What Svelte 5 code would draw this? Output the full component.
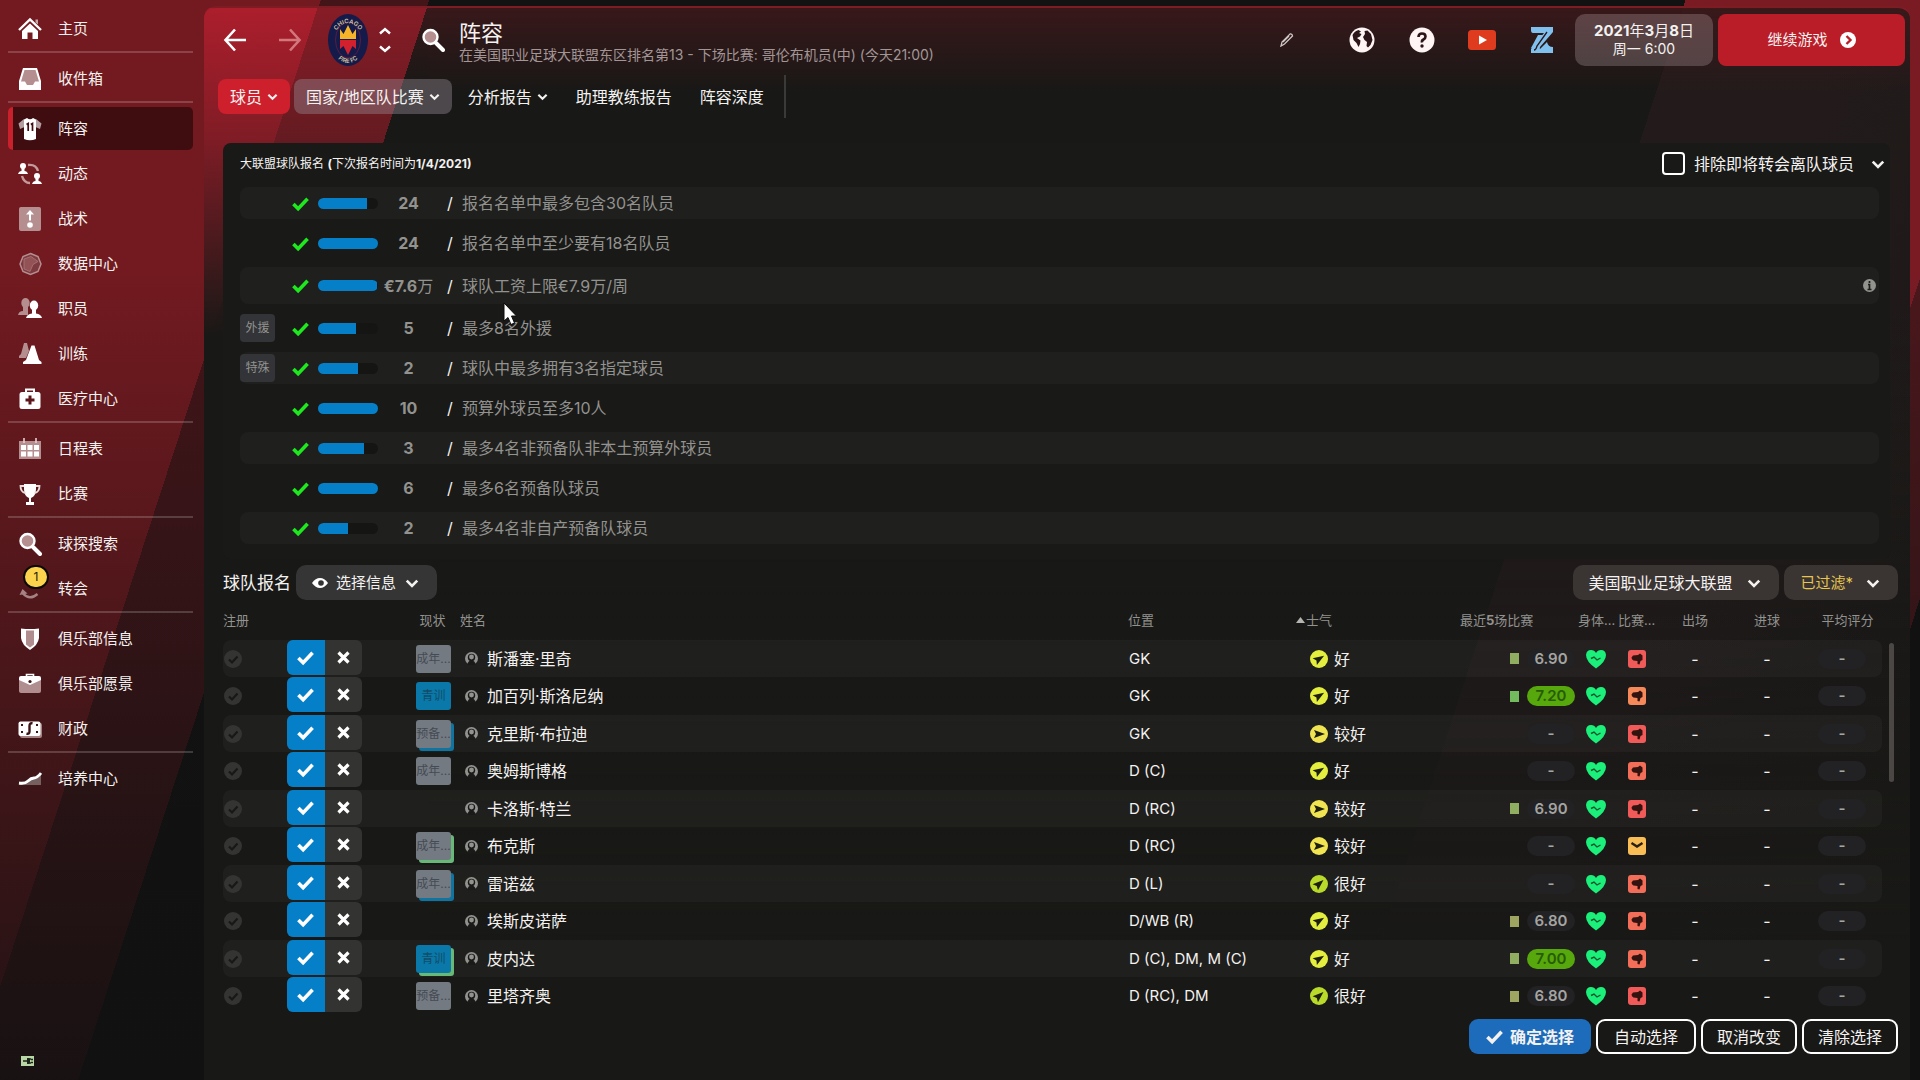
<script>
  const nav = [
    [{ icon: 'home', label: '主页' }],
    [{ icon: 'inbox', label: '收件箱' }],
    [
      { icon: 'shirt', label: '阵容', active: true },
      { icon: 'dynamics', label: '动态' },
      { icon: 'tactics', label: '战术' },
      { icon: 'data', label: '数据中心' },
      { icon: 'staff', label: '职员' },
      { icon: 'training', label: '训练' },
      { icon: 'medical', label: '医疗中心' }
    ],
    [
      { icon: 'calendar', label: '日程表' },
      { icon: 'trophy', label: '比赛' }
    ],
    [
      { icon: 'search', label: '球探搜索' },
      { icon: 'transfer', label: '转会', badge: 1 }
    ],
    [
      { icon: 'shield', label: '俱乐部信息' },
      { icon: 'briefcase', label: '俱乐部愿景' },
      { icon: 'money', label: '财政' }
    ],
    [{ icon: 'growth', label: '培养中心' }]
  ];

  const tabs = [
    { label: '球员', menu: true, kind: 'primary' },
    { label: '国家/地区队比赛', menu: true, kind: 'soft' },
    { label: '分析报告', menu: true, kind: '' },
    { label: '助理教练报告', menu: false, kind: '' },
    { label: '阵容深度', menu: false, kind: '' }
  ];

  const rules = [
    { tag: '', fill: 82, value: '24', unit: '', text: '报名名单中最多包含30名队员' },
    { tag: '', fill: 100, value: '24', unit: '', text: '报名名单中至少要有18名队员' },
    { tag: '', fill: 98, value: '€7.6', unit: '万', text: '球队工资上限€7.9万/周', info: true },
    { tag: '外援', fill: 63, value: '5', unit: '', text: '最多8名外援' },
    { tag: '特殊', fill: 66, value: '2', unit: '', text: '球队中最多拥有3名指定球员' },
    { tag: '', fill: 100, value: '10', unit: '', text: '预算外球员至多10人' },
    { tag: '', fill: 76, value: '3', unit: '', text: '最多4名非预备队非本土预算外球员' },
    { tag: '', fill: 100, value: '6', unit: '', text: '最多6名预备队球员' },
    { tag: '', fill: 50, value: '2', unit: '', text: '最多4名非自产预备队球员' }
  ];

  const players = [
    { tag: '成年...', name: '斯潘塞·里奇', pos: 'GK', morale: 'good', form: 'a', rating: '6.90', sharp: 'r1' },
    { tag: '青训', youth: true, name: '加百列·斯洛尼纳', pos: 'GK', morale: 'good', form: 'c', rating: '7.20', sharp: 'r3' },
    { tag: '预备...', back: 'blue', name: '克里斯·布拉迪', pos: 'GK', morale: 'fair', rating: '-', sharp: 'r1' },
    { tag: '成年...', name: '奥姆斯博格', pos: 'D (C)', morale: 'good', rating: '-', sharp: 'r2' },
    { tag: '', name: '卡洛斯·特兰', pos: 'D (RC)', morale: 'fair', form: 'a', rating: '6.90', sharp: 'r1' },
    { tag: '成年...', back: 'green', name: '布克斯', pos: 'D (RC)', morale: 'fair', rating: '-', sharp: 'steady' },
    { tag: '成年...', back: 'blue', name: '雷诺兹', pos: 'D (L)', morale: 'great', rating: '-', sharp: 'r2' },
    { tag: '', name: '埃斯皮诺萨', pos: 'D/WB (R)', morale: 'good', form: 'b', rating: '6.80', sharp: 'r2' },
    { tag: '青训', youth: true, back: 'green', name: '皮内达', pos: 'D (C), DM, M (C)', morale: 'good', form: 'a', rating: '7.00', sharp: 'r2' },
    { tag: '预备...', name: '里塔齐奥', pos: 'D (RC), DM', morale: 'great', form: 'b', rating: '6.80', sharp: 'r1' }
  ];
  const moraleText = { good: '好', fair: '较好', great: '很好' };
  const moraleTurn = { good: -32, fair: 0, great: -42 };

  let excluded = $state(false);
  let picks = $state(players.map(() => true));
</script>

{#snippet chevron(size)}
  <svg class="chev" width={size} height={size} viewBox="0 0 12 12" aria-hidden="true">
    <path d="M1.5 4 6 8.5 10.500 4" fill="none" stroke="currentColor" stroke-width="2.3" />
  </svg>
{/snippet}

{#snippet tick(w)}
  <svg width={w} height={w} viewBox="0 0 18 18" aria-hidden="true">
    <path d="M1.500 9.500 6.500 14.500 16.500 4" fill="none" stroke="currentColor" stroke-width="3.8" />
  </svg>
{/snippet}

{#snippet lens()}
  <circle cx="9.500" cy="9" r="7" fill="#b58f90" stroke="#fff" stroke-width="2.4" />
  <path d="m15 15 7 7" stroke="#fff" stroke-width="4" stroke-linecap="round" />
{/snippet}

{#snippet navIcon(name)}
  <svg width="24" height="24" viewBox="0 0 24 24" aria-hidden="true" fill="#fff">
    {#if name === 'home'}
      <path d="M1 13 12 2.500 23 13" fill="none" stroke="#fff" stroke-width="2.4" />
      <path d="M12 6.500 20 14v8h-5.500v-6.500h-5V22H4v-8z" />
      <path d="M17.500 2.500H20v5l-2.500-2z" opacity=".6" />
    {:else if name === 'inbox'}
      <path d="M5 1h14l4 13v9H1v-9z" />
      <path d="M6.500 3h11l3.500 11.500h-4L15 18H9l-2-3.500H3z" fill="#b58f90" />
    {:else if name === 'shirt'}
      <path d="M6 2 .5 6.500 2 12l4.500-2zM18 2l5.500 4.500L22 12l-4.500-2z" opacity=".6" />
      <path d="M6 2.500 9 1q3 2.500 6 0l3 1.500V22q-6 2.500-12 0z" />
      <path d="M8.500 7.500 10.200 6.500V14M12.800 7.500 14.500 6.500V14" fill="none" stroke="#3f0d10" stroke-width="1.700" />
    {:else if name === 'dynamics'}
      <circle cx="5" cy="4" r="3" /><path d="M0 12q1-3 3.500-3V6h3v3Q9 9 10 12z" />
      <circle cx="19" cy="14" r="3" /><path d="M14 22q1-3 3.500-3v-3h3v3q2.500 0 3.500 3z" />
      <path d="M10 3q8-1 10 6M4 14q2 7 8 7" fill="none" stroke="#c59a9b" stroke-width="2.400" />
    {:else if name === 'tactics'}
      <rect x="1" y="0" width="22" height="24" rx="2" fill="#b58f90" />
      <path d="M12 3 8 7.500H11v6h2V7.500h3z" /><circle cx="12" cy="18" r="2.800" />
    {:else if name === 'data'}
      <path d="m12.500 1.500 7.500 3 3 7.500-3 7.500-7.500 3-7.500-3-3-7.500 3-7.500z" fill="#7d3a3f" stroke="#b58f90" stroke-width="1.500" />
      <path d="m6 7 7-2.500 7 5-5 3-3 7-6-2.500z" fill="#935256" stroke="#a9797b" stroke-width=".8" />
    {:else if name === 'staff'}
      <g fill="#b58f90"><ellipse cx="7.500" cy="6" rx="4.200" ry="5" /><path d="M0 18q1-4 5-4V9h5v9z" /></g>
      <ellipse cx="16" cy="8.500" rx="4.200" ry="5" /><path d="M8 21q1-4 6-4.500v-4h4v4q5 .5 6 4.500z" />
    {:else if name === 'training'}
      <path d="m6 1 3 0 2 8-3 7H1v-2l2-2z" fill="#b58f90" />
      <path d="M13.500 3.500h3L21 18l2.500 2v2H5v-2l3-2z" />
    {:else if name === 'medical'}
      <path d="M8 5V2.500h8V5" fill="none" stroke="#fff" stroke-width="2" />
      <rect x="1.500" y="5" width="21" height="17" rx="2.500" />
      <path d="M12 8.500v9M7.500 13h9" stroke="#5c161b" stroke-width="3" />
    {:else if name === 'calendar'}
      <path d="M1 4h22v18H1z" fill="#b58f90" /><path d="M6 1v5M18 1v5" stroke="#e4cfcf" stroke-width="1.600" />
      <path d="M3 8h5v5H3zM9.500 8h5v5h-5zM16 8h5v5h-5zM3 14.500h5v5H3zM9.500 14.500h5v5h-5zM16 14.500h5v5h-5z" />
    {:else if name === 'trophy'}
      <path d="M6 2h12v5q0 7-5 9v4h3v3H8v-3h3v-4Q6 14 6 7z" />
      <path d="M6 4H2.500q0 6 5 7M18 4h3.500q0 6-5 7" fill="none" stroke="#e9dcdc" stroke-width="1.800" />
    {:else if name === 'search'}
      {@render lens()}
    {:else if name === 'transfer'}
      <path d="M4.500 16q7 8 15 1" fill="none" stroke="#a58384" stroke-width="2.400" />
      <path d="m1.500 18 3-6 5 4.500z" fill="#a58384" />
    {:else if name === 'shield'}
      <path d="M3 1.500q9 1 18 0V11q-1 7-9 12-8-5-9-12z" />
      <path d="M8 3.500h8v14l-4 3-4-3z" fill="#b08e90" />
    {:else if name === 'briefcase'}
      <path d="M8.500 5V2.500h7V5" fill="none" stroke="#fff" stroke-width="1.600" />
      <path d="M1 8h22v11q0 2-2 2H3q-2 0-2-2z" fill="#b08e90" />
      <path d="M3 4h18q2 0 2 2v2l-11 5L1 8V6q0-2 2-2z" /><circle cx="12" cy="9.500" r="1.600" fill="#3b1316" />
    {:else if name === 'money'}
      <rect x="2" y="6" width="22" height="15" rx="2" fill="#a58384" />
      <rect x="0.500" y="4.500" width="22" height="14.500" rx="2" />
      <path d="M14.500 6.500q-3-1-3 2.500v5.500q0 3-3 2" fill="none" stroke="#3b1316" stroke-width="2.400" />
      <path d="M3 7h2v2H3zM18 7h2v2h-2zM3 14h2v2H3zM18 14h2v2h-2z" fill="#3b1316" />
    {:else if name === 'growth'}
      <path d="M1 17h6l5-5 11-5v11H1z" fill="#75605f" />
      <path d="M1 16q6 1 9-2t6-3 7-5" fill="none" stroke="#fff" stroke-width="2.800" />
    {/if}
  </svg>
{/snippet}

<div class="app">
  <nav class="side" aria-label="主菜单">
    {#each nav as group}
      <ul>
        {#each group as item}
          <li>
            <a href="#{item.icon}" class:active={item.active}>
              <span class="ico">
                {@render navIcon(item.icon)}
                {#if item.badge}<span class="count">{item.badge}</span>{/if}
              </span>
              {item.label}
            </a>
          </li>
        {/each}
      </ul>
    {/each}
    <svg class="battery" width="14" height="10" viewBox="0 0 14 10" aria-hidden="true">
      <rect width="13" height="10" fill="#b9d6a5" />
      <path d="M2 5h4M6 3h4M6 7h4M10 3.500h2M10 6.500h2M7 2v6" stroke="#1c2419" stroke-width="1.500" />
      <path d="M6 2.500h3v5H6z" fill="#1c2419" />
    </svg>
  </nav>

  <main>
    <header class="top">
      <button class="plain" aria-label="后退">
        <svg width="24" height="24" viewBox="0 0 24 24"><path d="M23 12H3M12 1.500 2.500 12 12 22.500" fill="none" stroke="#fff" stroke-width="2.600" /></svg>
      </button>
      <button class="plain fwd" aria-label="前进">
        <svg width="24" height="24" viewBox="0 0 24 24"><path d="M1 12h20M12 1.500 21.500 12 12 22.500" fill="none" stroke="#d4777d" stroke-width="2.600" /></svg>
      </button>
      <svg class="crest" width="40" height="52" viewBox="0 0 40 52" role="img" aria-label="Chicago Fire FC">
        <defs>
          <path id="arcTop" d="M7 20A14 17 0 0 1 33 20" />
          <path id="arcBottom" d="M5 31A15 18 0 0 0 35 31" />
        </defs>
        <ellipse cx="20" cy="26" rx="20" ry="26" fill="#141a4a" />
        <ellipse cx="20" cy="26" rx="12.500" ry="18" fill="none" stroke="#5d1a40" />
        <text fill="#d3c49f" font-size="6" font-weight="600" text-anchor="middle"><textPath href="#arcTop" startOffset="50%">CHICAGO</textPath></text>
        <text fill="#d3c49f" font-size="6" font-weight="600" text-anchor="middle"><textPath href="#arcBottom" startOffset="50%">FIRE FC</textPath></text>
        <path d="M12 25V15l3.500 5L20 11l4.500 9 3.500-5v10z" fill="#f6b428" />
        <path d="M12 26h16v9l-3.500-3L20 41l-4.500-9-3.500 3z" fill="#d2202f" />
      </svg>
      <div class="step">
        <button class="plain" aria-label="上一支球队"><svg width="12" height="8" viewBox="0 0 12 8"><path d="M1 6.500 6 2l5 4.500" fill="none" stroke="#fff" stroke-width="2.400" /></svg></button>
        <button class="plain" aria-label="下一支球队"><svg width="12" height="8" viewBox="0 0 12 8"><path d="M1 1.500 6 6l5-4.500" fill="none" stroke="#fff" stroke-width="2.400" /></svg></button>
      </div>
      <button class="plain find" aria-label="搜索">
        <svg width="24" height="24" viewBox="0 0 24 24">{@render lens()}</svg>
      </button>
      <div class="title">
        <h1>阵容</h1>
        <p>在美国职业足球大联盟东区排名第13 - 下场比赛: 哥伦布机员(中) (今天21:00)</p>
      </div>
      <div class="tools">
        <button class="plain" aria-label="编辑">
          <svg width="14" height="14" viewBox="0 0 14 14"><path d="m1 13 1-4 8-8q2-.5 2.500 2l-8 8zM3 9l6-6" fill="none" stroke="#cfc6c6" stroke-width="1.300" /></svg>
        </button>
        <button class="plain" aria-label="世界">
          <svg width="26" height="26" viewBox="0 0 26 26"><circle cx="13" cy="13" r="12.500" fill="#fff5f4" /><path d="M3.500 8q2-4 6-5l2.500 1.500-2 1.500 2.500 1-1.500 2.500L8 11l3.500 2.500-.5 3.500-1.500 3-2-4-3-3zM15.500 4l3-.5 3.500 3.500 1.500 6-2 5-2.500 2.500-1.500-1.500.5-4-2.500-2-1.500-3 2-3z" fill="#2c1619" /></svg>
        </button>
        <button class="plain" aria-label="帮助">
          <svg width="26" height="26" viewBox="0 0 26 26"><circle cx="13" cy="13" r="12.500" fill="#fff5f4" /><path d="M9.500 10q0-3.500 3.500-3.500t3.500 3q0 2-2 3T13 15.500" fill="none" stroke="#2c1619" stroke-width="2.600" /><circle cx="13" cy="19" r="1.700" fill="#2c1619" /></svg>
        </button>
        <button class="plain" aria-label="视频">
          <svg width="28" height="20" viewBox="0 0 28 20"><rect width="28" height="20" rx="3.500" fill="#df3b1f" /><path d="m11 5.500 8 4.500-8 4.500z" fill="#fff" /></svg>
        </button>
        <button class="plain" aria-label="社区">
          <svg width="24" height="26" viewBox="0 0 24 26"><path d="M1 0h22v5L10 20q-1 3 2 3h11v3H1v-4L14 6H3Q1 6 1 3z" fill="#7fc0ee" /><path d="M8 8h5L6 19q-2 3-5 2zM17 15q1 5 6 5v6H11q-3-1-1-4z" fill="#7fc0ee" /><path d="M17 5 7 19q-1 4-3 4" fill="none" stroke="#2c1619" stroke-width="1.300" /></svg>
        </button>
      </div>
      <button class="date">
        <span class="day"><b>2021</b>年<b>3</b>月<b>8</b>日</span>
        <span>周一 6:00</span>
      </button>
      <button class="go">
        继续游戏
        <svg width="16" height="16" viewBox="0 0 16 16" aria-hidden="true"><circle cx="8" cy="8" r="8" fill="#fff" /><path d="m6.500 4 4 4-4 4" fill="none" stroke="#bb1d28" stroke-width="2.400" /></svg>
      </button>
    </header>

    <div class="tabs">
      {#each tabs as tab}
        <button class="tab {tab.kind}">{tab.label}{#if tab.menu}{@render chevron(11)}{/if}</button>
      {/each}
    </div>

    <section class="rules">
      <div class="rules-head">
        <h2>大联盟球队报名 <b>(</b>下次报名时间为<b>1/4/2021)</b></h2>
        <label class="exclude"><input type="checkbox" bind:checked={excluded} />排除即将转会离队球员</label>
        <button class="plain fold" aria-label="收起">{@render chevron(14)}</button>
      </div>
      <ul>
        {#each rules as rule}
          <li class:tall={rule.info}>
            <span>{#if rule.tag}<span class="rtag">{rule.tag}</span>{/if}</span>
            <span class="met">{@render tick(17)}</span>
            <span class="bar"><span style:width="{rule.fill}%"></span></span>
            <span class="val"><b>{rule.value}</b>{rule.unit}</span>
            <span class="slash">/</span>
            <span>{rule.text}</span>
            {#if rule.info}
              <svg width="13" height="13" viewBox="0 0 13 13" aria-hidden="true"><circle cx="6.500" cy="6.500" r="6.500" fill="#92928f" /><path d="M6.500 2v2M5 5.500h1.500v5M4.500 10.500h4" fill="none" stroke="#1d1d1b" stroke-width="1.700" /></svg>
            {/if}
          </li>
        {/each}
      </ul>
      <svg class="pointer" width="14" height="24" viewBox="0 0 14 24" aria-hidden="true">
        <path d="M1 1v18l4-3.500 3 7 3.500-1.500-3-7h5z" fill="#fff" stroke="#0c0c0c" stroke-width="1" />
      </svg>
    </section>

    <section class="squad">
      <div class="squad-head">
        <h2>球队报名</h2>
        <button class="drop">
          <svg width="16" height="12" viewBox="0 0 16 12" aria-hidden="true"><path d="M0 6q3.500-5 8-5t8 5q-3.500 5-8 5T0 6z" fill="#fff" /><circle cx="9" cy="6" r="2.800" fill="#333" /></svg>
          选择信息{@render chevron(14)}
        </button>
        <span class="league">
          <select aria-label="赛事"><option>美国职业足球大联盟</option></select>
          {@render chevron(14)}
        </span>
        <button class="drop filter"><span>已过滤*</span>{@render chevron(14)}</button>
      </div>

      <div class="scroller">
        <table>
          <colgroup>
            <col class="c-reg" /><col class="c-pick" /><col class="c-tag" /><col /><col class="c-pos" /><col class="c-mor" />
            <col class="c-form" /><col class="c-con" /><col class="c-shp" /><col class="c-app" /><col class="c-goal" /><col class="c-avg" />
          </colgroup>
          <thead>
            <tr>
              <th>注册</th><th></th><th class="mid htag">现状</th><th class="hname">姓名</th><th>位置</th>
              <th class="hmor"><svg width="9" height="6" viewBox="0 0 9 6" aria-hidden="true"><path d="M0 6 4.500 0 9 6z" fill="#b4b4b1" /></svg>士气</th>
              <th class="hform">最近<b>5</b>场比赛</th><th>身体...</th><th>比赛...</th>
              <th class="mid">出场</th><th class="mid">进球</th><th class="mid havg">平均评分</th>
            </tr>
          </thead>
          <tbody>
            {#each players as p, i}
              <tr>
                <td><svg width="18" height="18" viewBox="0 0 18 18" aria-hidden="true"><circle cx="9" cy="9" r="9" fill="#343432" /><path d="m5 9.500 3 3 5.500-6" fill="none" stroke="#181817" stroke-width="2.200" /></svg></td>
                <td>
                  <span class="pick">
                    <button aria-label="注册{p.name}" aria-pressed={picks[i]} onclick={() => (picks[i] = true)}>{@render tick(17)}</button>
                    <button class="no" aria-label="移除{p.name}" aria-pressed={!picks[i]} onclick={() => (picks[i] = false)}>
                      <svg width="13" height="13" viewBox="0 0 13 13" aria-hidden="true"><path d="m1.500 1.500 10 10m0-10-10 10" stroke="currentColor" stroke-width="3.200" /></svg>
                    </button>
                  </span>
                </td>
                <td class="mid">{#if p.tag}<span class="ptag {p.back ?? ''}" class:youth={p.youth}>{p.tag}</span>{/if}</td>
                <td class="name">
                  <span class="flex">
                    <svg width="13" height="13" viewBox="0 0 13 13" aria-hidden="true"><circle cx="6.500" cy="6.500" r="6.500" fill="#92928f" /><circle cx="6.500" cy="5.500" r="3.700" fill="#1a1a19" /><path d="M2.500 13q0-4.500 4-4.500t4 4.500z" fill="#1a1a19" /><circle cx="6.500" cy="5" r="2.400" fill="#92928f" /></svg>
                    <a href="#player-{i}">{p.name}</a>
                  </span>
                </td>
                <td class="pos">{p.pos}</td>
                <td class="mor">
                  <span class="flex">
                    <svg class={p.morale} width="18" height="18" viewBox="0 0 18 18" aria-hidden="true"><circle cx="9" cy="9" r="9" fill="currentColor" /><path d="M4 5 15 9 4 13l2-4z" fill="#1d1f0c" transform="rotate({moraleTurn[p.morale]} 9 9)" /></svg>
                    {moraleText[p.morale]}
                  </span>
                </td>
                <td>
                  <span class="flex form">
                    {#if p.form}<span class="sq {p.form}"></span>{/if}
                    <span class="pill" class:win={p.rating.startsWith('7')}>{p.rating}</span>
                  </span>
                </td>
                <td class="mid icon"><svg width="20" height="20" viewBox="0 0 20 20" aria-hidden="true"><path d="M10 19.500Q0 12.500 0 6 .5 1 5 1q3.500 0 5 3 1.500-3 5-3 4.500 0 5 5 0 6.500-10 13.500z" fill="#1bf07a" /><path d="m5 9.500 3-1.500 3 3 3.500-2" fill="none" stroke="#12532e" stroke-width="1.400" /></svg></td>
                <td class="mid icon">
                  <svg class={p.sharp} width="18" height="18" viewBox="0 0 18 18" aria-hidden="true"><rect width="18" height="18" rx="3" fill="currentColor" />
                    {#if p.sharp === 'steady'}
                      <path d="M3.500 6 9 9.500 14.500 6" fill="none" stroke="#2a2010" stroke-width="2.400" />
                    {:else}
                      <path d="M3.500 7.500 5 5.500l5-.5 2-1.500 2.500 2v4.500l-2 1-1 3.500-2-.5V11l-4-.5q-2-1-2-3z" fill="#33130f" />
                    {/if}
                  </svg>
                </td>
                <td class="mid">-</td><td class="mid">-</td>
                <td class="mid icon"><span class="pill">-</span></td>
              </tr>
            {/each}
          </tbody>
        </table>
        <span class="thumb"></span>
      </div>

      <footer>
        <button class="confirm">{@render tick(17)}确定选择</button>
        <button class="auto">自动选择</button>
        <button>取消改变</button>
        <button>清除选择</button>
      </footer>
    </section>
  </main>
</div>

<style>
  :global(body) { background: #111; }
  .app {
    min-height: 100vh;
    box-sizing: border-box;
    display: grid;
    grid-template-columns: 204px minmax(0, 1fr);
    padding: 6px 10px 0 0;
    font-family: Inter, "Noto Sans CJK SC", sans-serif;
    font-size: 16px;
    line-height: 20px;
    color: #f4f2f0;
    background:
      linear-gradient(180deg, rgba(17, 17, 17, 0) 0, rgba(17, 17, 17, 0) 25%, rgba(17, 17, 17, .85) 100%),
      linear-gradient(108deg, #721a20 0 305px, #431519 305px 408px, #111211 408px 1603px, #7a1b24 1603px 1912px, #4a171c 1912px 2011px, #111 2011px);
  }
  button, select, input { font: inherit; color: inherit; margin: 0; }
  button { border: 0; padding: 0; background: none; cursor: pointer; }
  svg { display: block; flex: none; }
  ul { list-style: none; margin: 0; padding: 0; }
  h1, h2, p { margin: 0; font-weight: 400; }
  a { color: inherit; text-decoration: none; }
  b { font-weight: 700; }
  .plain { display: flex; align-items: center; justify-content: center; }

  .side { display: flex; flex-direction: column; padding: 0 11px 14px 8px; font-size: 15px; }
  .side ul + ul { border-top: 2px solid rgba(255, 255, 255, .18); padding-top: 3px; }
  .side li { height: 45px; display: flex; align-items: center; }
  .side a {
    box-sizing: border-box; width: 100%; height: 43px; display: flex; align-items: center; gap: 16px;
    padding-left: 5px; border-left: 5px solid transparent; border-radius: 5px;
  }
  .side a.active { background: #3f0d10; border-left-color: #c9202c; }
  .ico { position: relative; }
  .count {
    position: absolute; left: 5px; top: -12px; width: 22px; height: 20px; border: 2px solid #0c0a08; border-radius: 13px;
    background: #fbd34c; color: #221a0a; font-size: 12px; text-align: center;
  }
  .battery { margin: auto 0 0 13px; }

  main {
    display: flex; flex-direction: column; border-radius: 12px 12px 0 0; border-top: 2px solid rgba(160, 30, 42, .75); box-sizing: border-box;
    background:
      linear-gradient(180deg, rgba(24, 24, 22, 0) 0, rgba(24, 24, 22, .3) 130px, #181816 330px) 0 0 / 224px 100% no-repeat,
      linear-gradient(108deg, #ac1e2c 0 108px, #861c26 108px 212px, rgba(24, 24, 22, 0) 212px),
      linear-gradient(180deg, rgba(60, 24, 26, .9) 0, rgba(24, 24, 22, 0) 84px),
      linear-gradient(180deg, rgba(24, 24, 22, 0) 300px, #181816 940px),
      linear-gradient(108deg, #181816 1407px, #231b1b 1407px 1560px, #191816 1900px);
  }
  .top { display: flex; align-items: center; padding: 6px 5px 0 19px; height: 52px; }
  .fwd { margin-left: 31px; }
  .crest { margin-left: 26px; }
  .step { display: flex; flex-direction: column; gap: 10px; margin-left: 11px; }
  .find { margin-left: 30px; }
  .title { margin-left: 14px; padding-top: 4px; }
  h1 { font-size: 22px; line-height: 26px; }
  .title p { font-size: 14px; line-height: 18px; color: #a39596; white-space: nowrap; }
  .tools { margin-left: auto; display: grid; grid-template-columns: 90px repeat(4, 60px); place-items: center; padding-right: 3px; }
  .date {
    box-sizing: border-box; width: 138px; height: 52px; border-radius: 10px; background: rgba(255, 235, 240, .2);
    display: flex; flex-direction: column; align-items: center; justify-content: center; font-size: 14px; line-height: 18px;
  }
  .day { font-size: 15px; }
  .go {
    width: 187px; height: 52px; margin-left: 5px; border-radius: 8px; background: #bb1d28;
    display: flex; align-items: center; justify-content: center; gap: 12px; font-size: 15px;
  }

  .tabs { display: flex; align-items: center; gap: 4px; align-self: flex-start; height: 43px; margin: 9px 0 0 14px; padding-right: 8px; border-right: 2px solid #3a3a38; }
  .tab { height: 35px; padding: 0 12px; border-radius: 8px; display: flex; align-items: center; gap: 5px; white-space: nowrap; }
  .primary { background: #cd1f2c; }
  .soft { background: rgba(150, 140, 150, .42); }

  .rules { position: relative; margin: 25px 20px 0 19px; padding: 8px 0 15px 17px; border-radius: 8px; background: #191917; }
  .rules-head { display: flex; align-items: center; height: 25px; }
  .rules-head h2 { flex: 1; font-size: 12px; }
  .exclude { display: flex; align-items: center; gap: 9px; }
  .exclude input { appearance: none; box-sizing: border-box; width: 23px; height: 23px; border: 2px solid #fff; border-radius: 4px; }
  .exclude input:checked { background: #0580c8; }
  .fold { margin: 0 5px 0 17px; }
  .rules ul { display: grid; gap: 8px; margin: 11px 11px 0 0; }
  .rules li {
    height: 32px; display: grid; grid-template-columns: 52px 26px 60px 61px 23px minmax(0, 1fr) auto; align-items: center;
    box-sizing: border-box; border-radius: 8px; padding-right: 3px; color: #92928f;
  }
  .rules li.tall { height: 37px; }
  .rules li:nth-child(odd) { background: #1f1f1d; }
  .rtag { display: block; width: 35px; height: 28px; border-radius: 4px; background: #333438; text-align: center; font-size: 12px; line-height: 28px; }
  .met { color: #1ee81e; }
  .bar { height: 11px; border-radius: 6px; background: #151514; overflow: hidden; }
  .bar span { display: block; height: 100%; background: #0580c8; }
  .val { text-align: center; white-space: nowrap; }
  .slash { padding-left: 8px; color: #f4f2f0; }
  .pointer { position: absolute; left: 280px; top: 159px; }

  .squad { display: flex; flex-direction: column; margin: 6px 12px 0 19px; }
  .squad-head { display: flex; align-items: center; gap: 5px; height: 35px; }
  .squad-head h2 { font-size: 17px; white-space: nowrap; }
  .drop { display: flex; align-items: center; gap: 8px; height: 35px; padding: 0 18px 0 16px; border-radius: 10px; background: #353535; font-size: 15px; }
  .drop .chev { margin-left: 1px; }
  .league { margin-left: auto; display: grid; align-items: center; }
  .league select { grid-area: 1 / 1; appearance: none; height: 35px; border: 0; border-radius: 10px; background: #3a3433; padding: 0 46px 0 15px; outline: 0; }
  .league .chev { grid-area: 1 / 1; justify-self: end; margin-right: 18px; pointer-events: none; }
  .filter { background: #3a3433; }
  .filter span { color: #e6c650; }
  .filter .chev { margin-left: 5px; }

  .scroller { display: grid; grid-template-columns: minmax(0, 1fr) auto; column-gap: 7px; padding-right: 4px; }
  table { width: 100%; table-layout: fixed; border-collapse: separate; border-spacing: 0; }
  .c-reg { width: 57px; } .c-pick { width: 125px; } .c-tag { width: 52px; } .c-pos { width: 170px; } .c-mor { width: 160px; }
  .c-form { width: 120px; } .c-con { width: 40px; } .c-shp { width: 42px; } .c-app { width: 74px; } .c-goal { width: 70px; } .c-avg { width: 80px; }
  th { height: 40px; padding: 0 0 0 2px; box-sizing: border-box; text-align: left; font-size: 13px; font-weight: 400; color: #92928f; white-space: nowrap; }
  th:first-child { padding: 0; }
  th.mid, td.mid { text-align: center; padding: 0; }
  th.htag { padding-left: 3px; }
  .hname { padding-left: 3px; }
  .hmor { padding: 0; }
  .hmor svg { display: inline-block; margin-right: 1px; vertical-align: 2px; }
  .hform { padding-left: 4px; }
  th.havg { padding-left: 11px; }
  td { height: 38px; padding: 0; box-sizing: border-box; white-space: nowrap; }
  tbody tr:nth-child(odd) td { height: 37px; background: rgba(255, 255, 255, .03); }
  td:first-child { border-radius: 8px 0 0 8px; padding-left: 1px; }
  td:last-child { border-radius: 0 8px 8px 0; }
  td:nth-child(2) { vertical-align: top; }
  .pick { display: flex; width: 75px; height: 35px; margin-left: 7px; border-radius: 6px; overflow: hidden; background: #333331; color: #fff; }
  .pick button { flex: 1; display: flex; align-items: center; justify-content: center; }
  .pick button[aria-pressed="true"] { background: #0580c8; }
  .ptag { display: block; box-sizing: border-box; width: 35px; height: 28px; margin-left: 11px; border-radius: 3px; background: #747a82; color: #454b53; font-size: 12px; line-height: 28px; text-align: center; }
  .youth { background: #0a78a8; color: #114d69; }
  .blue { box-shadow: 3px 3px 0 #0f74a0; }
  .green { box-shadow: 3px 3px 0 #68b878; }
  .flex { display: flex; align-items: center; }
  .name .flex { gap: 9px; padding-left: 8px; }
  .pos { padding-left: 3px; font-size: 15px; }
  .mor .flex { gap: 6px; padding-left: 14px; }
  .good { color: #e4ee3e; } .fair { color: #f0e452; } .great { color: #b9d92b; }
  .form { justify-content: flex-end; gap: 8px; padding-right: 1px; }
  .sq { width: 9px; height: 11px; }
  .sq.a { background: #8fae60; } .sq.b { background: #9da560; } .sq.c { background: #72bc5e; }
  .pill { display: block; width: 48px; height: 20px; border-radius: 10px; background: #222224; color: #a5a5a2; font-weight: 600; text-align: center; line-height: 20px; font-size: 15px; }
  .pill.win { background: #57a80c; color: #275c05; }
  .icon svg, .icon .pill { margin: 0 auto; }
  .r1 { color: #f05a58; } .r2 { color: #f26e58; } .r3 { color: #f5895a; } .steady { color: #f9bd55; }
  .thumb { width: 5px; height: 139px; margin-top: 43px; border-radius: 3px; background: #4a4745; }

  footer { display: flex; justify-content: flex-end; gap: 5px; margin-top: 4px; padding-bottom: 25px; }
  footer button { box-sizing: border-box; height: 35px; padding: 0 14px; border: 2px solid #fff; border-radius: 9px; display: flex; align-items: center; gap: 7px; white-space: nowrap; }
  footer .auto { padding: 0 16px; }
  footer .confirm { padding: 0 17px; border: 0; background: #1d6cbc; font-weight: 700; }
</style>
